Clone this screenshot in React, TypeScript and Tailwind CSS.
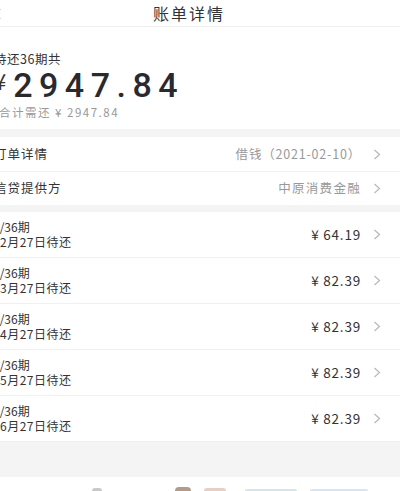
import { ChevronLeft } from "lucide-react";

interface Installment {
  period: string;
  due: string;
  amount: string;
}

const INSTALLMENTS: Installment[] = [
  { period: "1/36期", due: "2月27日待还", amount: "64.19" },
  { period: "2/36期", due: "3月27日待还", amount: "82.39" },
  { period: "3/36期", due: "4月27日待还", amount: "82.39" },
  { period: "4/36期", due: "5月27日待还", amount: "82.39" },
  { period: "5/36期", due: "6月27日待还", amount: "82.39" },
];

function Chevron() {
  return (
    <svg width="8" height="11" viewBox="0 0 8 11" fill="none" className="shrink-0">
      <polyline points="1.5,1 6.5,5.5 1.5,10" stroke="#b8b8b8" strokeWidth="1.2" />
    </svg>
  );
}

export default function App() {
  return (
    <div
      className="w-[400px] h-[491px] overflow-hidden bg-white text-[#333]"
      style={{ fontFamily: '"Noto Sans CJK SC", "Noto Sans", sans-serif' }}
    >
      <div className="-ml-[22px] w-[422px]">
        {/* header */}
        <div className="relative h-[27px] flex items-center justify-center border-b border-[#efefef]">
          <ChevronLeft className="absolute left-[12px] top-[6px] w-4 h-4 text-[#666]" strokeWidth={1.5} />
          <span className="text-[16px] tracking-[2px] text-[#333]">账单详情</span>
        </div>

        {/* summary */}
        <div className="pl-4 pt-[23px] pb-[9px]">
          <div className="text-[12.5px] leading-[18px] tracking-[0.5px] text-[#333]">待还36期共</div>
          <div className="flex items-center h-[33px]">
            <span className="text-[22px] leading-none self-start mt-[1px] text-[#333]">¥</span>
            <span
              className="ml-[7px] text-[34px] leading-[30px] font-medium tracking-[6.5px] text-[#2a2a2e]"
              style={{ fontFamily: "Roboto, sans-serif" }}
            >
              2947.84
            </span>
          </div>
          <div className="mt-[3px] ml-[5px] text-[11.5px] leading-[16px] tracking-[1.5px] text-[#999]">
            合计需还 ¥ 2947.84
          </div>
        </div>

        <div className="h-2 bg-[#f4f4f5]" />

        {/* details */}
        <div className="flex items-center justify-between h-[35px] pl-4 pr-[19px] border-b border-[#f0f0f0]">
          <span className="text-[12.5px] tracking-[1px] text-[#333]">订单详情</span>
          <div className="flex items-center gap-3">
            <span className="text-[12.5px] tracking-[0.8px] text-[#999]">借钱（2021-02-10）</span>
            <Chevron />
          </div>
        </div>
        <div className="flex items-center justify-between h-[33px] pl-4 pr-[19px]">
          <span className="text-[12.5px] tracking-[1px] text-[#333]">信贷提供方</span>
          <div className="flex items-center gap-3">
            <span className="text-[12.5px] tracking-[1.3px] text-[#999]">中原消费金融</span>
            <Chevron />
          </div>
        </div>

        <div className="h-[7px] bg-[#f4f4f5]" />

        {/* installments */}
        {INSTALLMENTS.map((it) => (
          <div
            key={it.period}
            className="flex items-center justify-between h-[46px] pl-[15px] pr-[19px] border-b border-[#f0f0f0]"
          >
            <div className="flex flex-col gap-[1px]">
              <span className="text-[12px] leading-[14px] text-[#333]">{it.period}</span>
              <span className="pl-[7px] text-[12px] leading-[14px] tracking-[0.5px] text-[#333]">{it.due}</span>
            </div>
            <div className="flex items-center gap-3">
              <span className="text-[13.5px] tracking-[0.8px] text-[#333]">¥ {it.amount}</span>
              <Chevron />
            </div>
          </div>
        ))}

        <div className="h-[35px] bg-[#f4f4f5]" />

        {/* bottom bar (cut off) */}
        <div className="relative h-[14px] bg-white">
          <div className="absolute bottom-0 left-[114px] w-[10px] h-[3px] rounded-t bg-[#c8c8c8]" />
          <div className="absolute bottom-0 left-[197px] w-[16px] h-[4px] rounded-t bg-[#b79a84]" />
          <div className="absolute bottom-0 left-[226px] w-[22px] h-[3px] rounded-t bg-[#e7cfc6]" />
          <div className="absolute bottom-0 left-[267px] w-[52px] h-[2px] rounded-t bg-[#cfe8ee]" />
          <div className="absolute bottom-0 left-[332px] w-[58px] h-[2px] rounded-t bg-[#d3e6f3]" />
        </div>
      </div>
    </div>
  );
}
